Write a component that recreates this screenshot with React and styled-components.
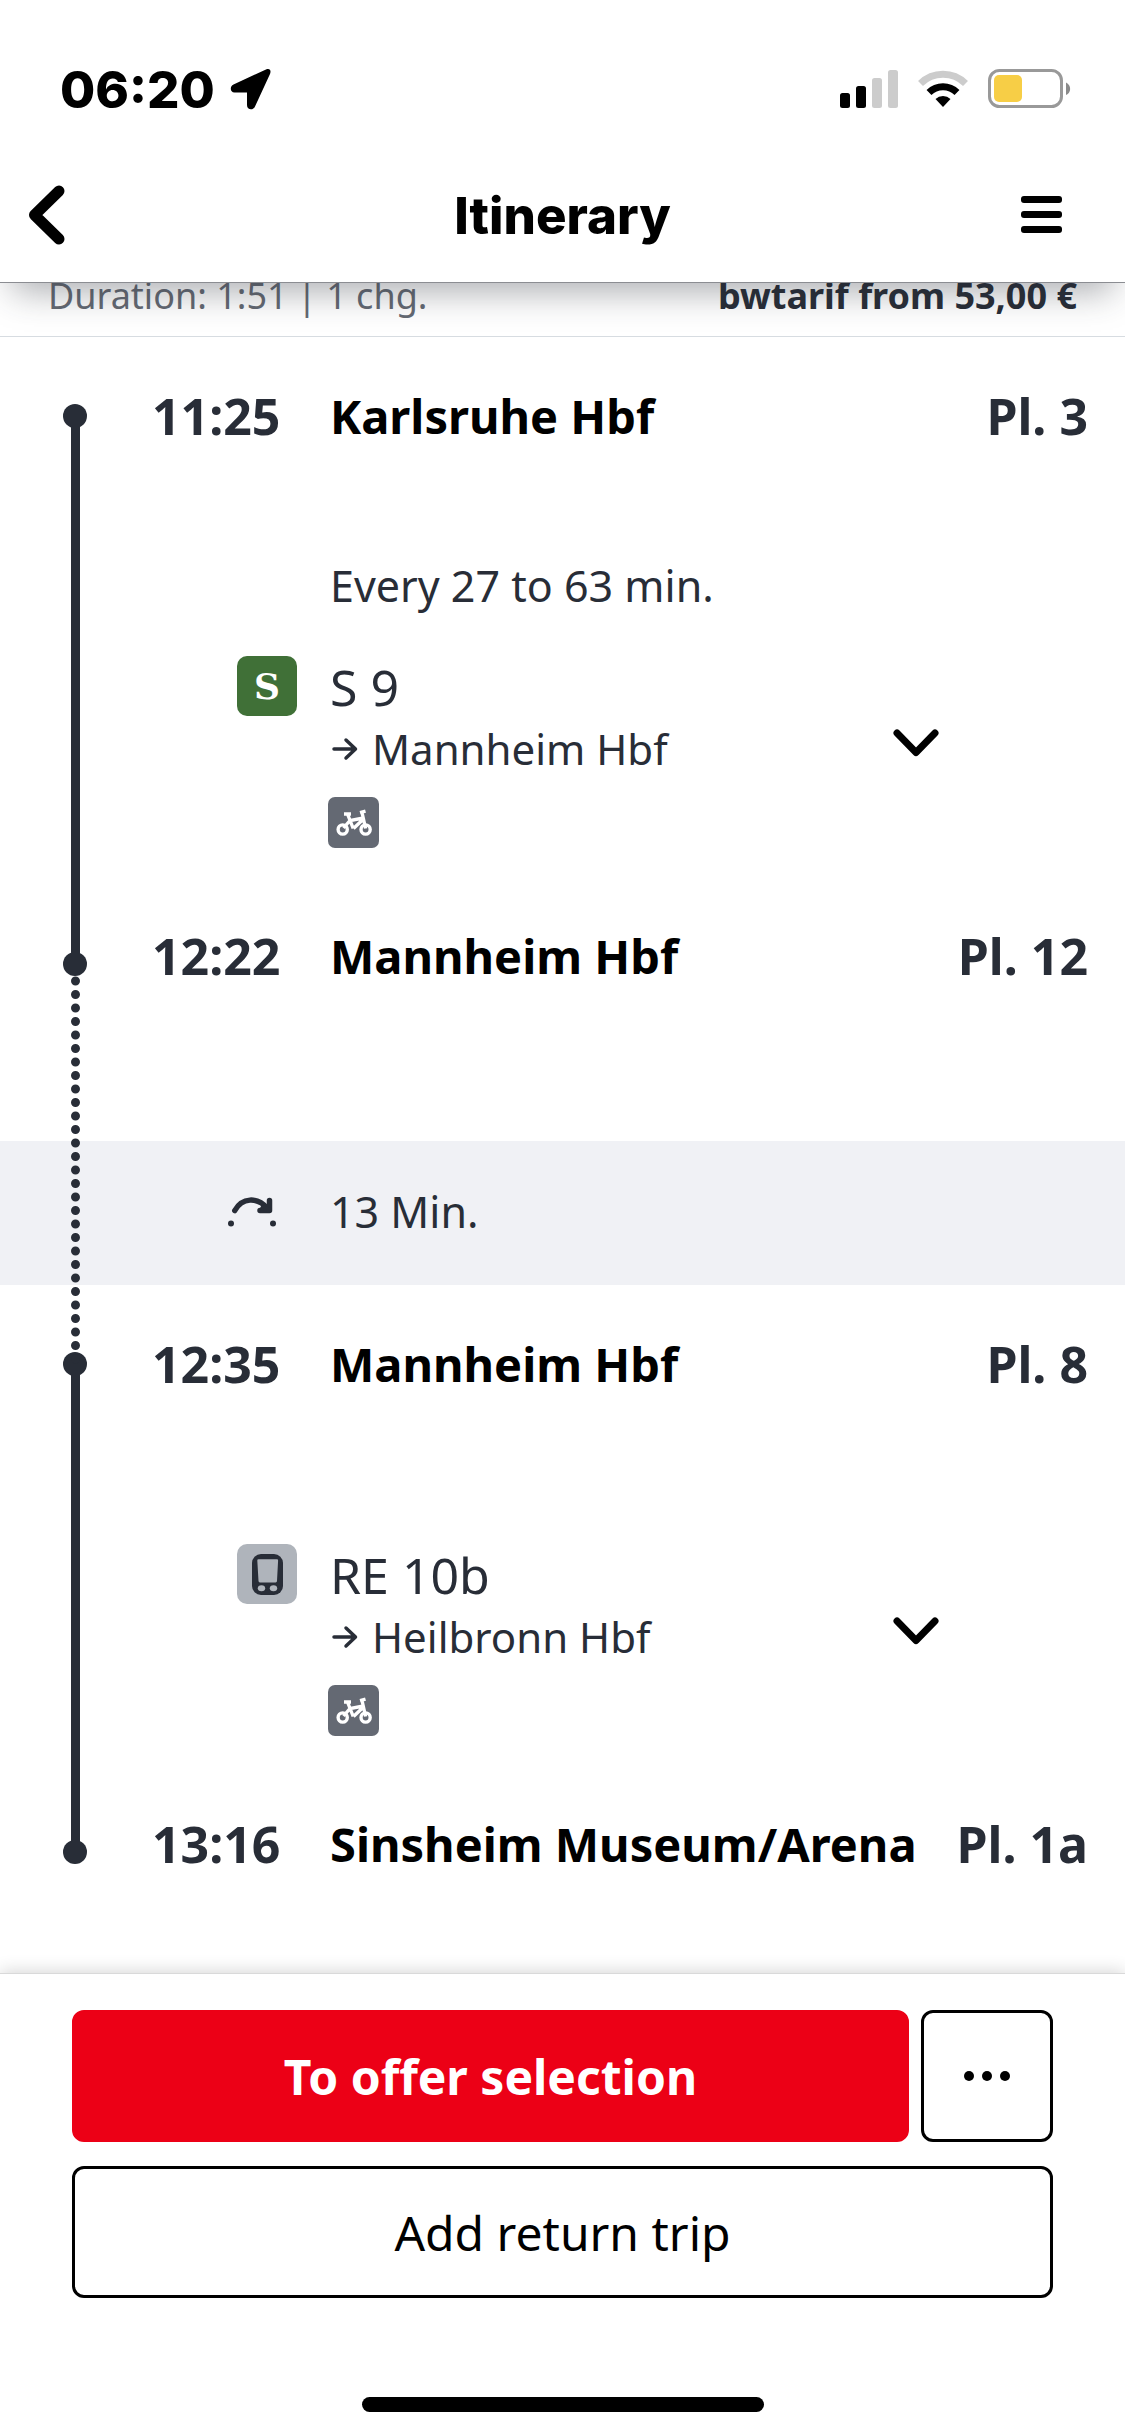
import React, { useState } from "react";
import styled, { createGlobalStyle } from "styled-components";

const tripRows = [
  { type: "stop", time: "11:25", station: "Karlsruhe Hbf", platform: "Pl. 3" },
  {
    type: "leg",
    product: "suburban",
    line: "S 9",
    direction: "Mannheim Hbf",
    headway: "Every 27 to 63 min.",
  },
  { type: "stop", time: "12:22", station: "Mannheim Hbf", platform: "Pl. 12", arrival: true },
  { type: "transfer", text: "13 Min." },
  { type: "stop", time: "12:35", station: "Mannheim Hbf", platform: "Pl. 8" },
  { type: "leg", product: "regional", line: "RE 10b", direction: "Heilbronn Hbf" },
  {
    type: "stop",
    time: "13:16",
    station: "Sinsheim Museum/Arena",
    platform: "Pl. 1a",
    arrival: true,
  },
];

const StatusBar = () => (
  <StStatusBar>
    <StClock>
      06:20
      <svg width="42" height="42" viewBox="0 0 42 42">
        <path
          d="M37 1.500 4.500 16.500C.5 18.500 1 24.500 5.500 24.500H18V37C18 42.500 24.500 42.500 26 38.500L41 6C42.500 2 40.500 0 37 1.500Z"
        />
      </svg>
    </StClock>
    <StStatusIcons>
      <svg width="58" height="38" viewBox="0 0 58 38">
        <rect x="0" y="23" width="10" height="15" rx="2.500" />
        <rect x="16" y="16" width="10" height="22" rx="2.500" />
        <rect x="32" y="8" width="10" height="30" rx="2.500" fill="#cccccc" />
        <rect x="48" y="0" width="10" height="38" rx="2.500" fill="#cccccc" />
      </svg>
      <svg width="50" height="38" viewBox="0 0 50 38">
        <path d="M2.500 13.500A32 32 0 0 1 47.500 13.500" fill="none" stroke="#cccccc" strokeWidth="7" />
        <path d="M11 22.500A20 20 0 0 1 39 22.500" fill="none" stroke="#000" strokeWidth="7" />
        <path d="M17.500 29A11 11 0 0 1 32.500 29L25 37Z" />
      </svg>
      <svg width="84" height="40" viewBox="0 0 84 40">
        <rect x="1.500" y="1.500" width="72" height="36" rx="10" fill="none" stroke="#999999" strokeWidth="3" />
        <rect x="6" y="6" width="28" height="27" rx="5" fill="#f7ce46" />
        <path d="M78 13.500C83.500 16 83.500 24 78 26Z" fill="#8a8a8a" />
      </svg>
    </StStatusIcons>
  </StStatusBar>
);

const BikeIcon = () => (
  <svg width="51" height="51" viewBox="0 0 51 51" fill="none" stroke="#fff" strokeWidth="3.400">
    <circle cx="14.700" cy="32.500" r="4.600" />
    <circle cx="37.600" cy="32.500" r="4.600" />
    <path d="M16 17h7M19.700 17.500 25.200 31.500M15.500 31l6.500-7.500L35.500 21M25.500 31.500 36 21.500M37.600 31.500 34 15.500M32 15.700l5.500-1.500" />
  </svg>
);

const TrainIcon = () => (
  <svg width="60" height="60" viewBox="0 0 60 60">
    <rect x="15" y="10" width="31" height="41" rx="9" fill="#282d37" />
    <path d="M20.300 16.500Q20.200 15.300 21.500 15.300H40Q41.200 15.300 41.100 16.500L40 37Q39.900 38.400 38.600 38.400H22.900Q21.600 38.400 21.500 37Z" fill="#afb4bb" />
    <ellipse cx="24.500" cy="44.200" rx="3.700" ry="3" fill="#afb4bb" />
    <ellipse cx="36.500" cy="44.200" rx="3.700" ry="3" fill="#afb4bb" />
  </svg>
);

const Stop = ({ row, time, station, platform, arrival }) => (
  <StStop $row={row}>
    <StDot $arrival={arrival} />
    <StTime>{time}</StTime>
    <StStation>{station}</StStation>
    <StPlatform>{platform}</StPlatform>
  </StStop>
);

const Leg = ({ row, product, line, direction, headway }) => {
  const [open, setOpen] = useState(false);

  return (
    <StLeg $row={row} $headway={!!headway}>
      {headway && <StHeadway>{headway}</StHeadway>}
      <StProduct $product={product}>{product === "suburban" ? "S" : <TrainIcon />}</StProduct>
      <StLegInfo>
        <StLine>{line}</StLine>
        <StDirection>
          <svg width="26" height="24" viewBox="0 0 26 24" fill="none" stroke="#282d37" strokeWidth="3.500" strokeLinecap="round" strokeLinejoin="round">
            <path d="M2 12h21M14 3l9.500 9-9.500 9" />
          </svg>
          {direction}
        </StDirection>
        <StAttribute>
          <BikeIcon />
        </StAttribute>
      </StLegInfo>
      <StExpand aria-label="Show stops" aria-expanded={open} onClick={() => setOpen(!open)}>
        <svg width="46" height="28" viewBox="0 0 46 28" fill="none" stroke="#000" strokeWidth="7" strokeLinecap="round" strokeLinejoin="round">
          <path d="M4 4l19 19.500L42 4" />
        </svg>
      </StExpand>
    </StLeg>
  );
};

const Transfer = ({ row, text }) => (
  <StTransfer $row={row}>
    <svg width="48" height="32" viewBox="0 0 48 32" fill="none" stroke="#282d37" strokeWidth="5.500" strokeLinecap="round" strokeLinejoin="round">
      <path d="M6.800 15.500C14 2.500 29 1.500 39.500 13.500" />
      <path d="M41.500 5.500V15.500H32" />
      <path d="M35 13l6 2" />
      <circle cx="3" cy="28.500" r="3" fill="#282d37" stroke="none" />
      <circle cx="45" cy="28.500" r="3" fill="#282d37" stroke="none" />
    </svg>
    <span>{text}</span>
  </StTransfer>
);

const rowTypes = { stop: Stop, leg: Leg, transfer: Transfer };

const App = () => {
  return (
    <StPage>
      <GlobalStyle />
      <StHeader>
        <StatusBar />
        <StNav>
          <StNavBtn aria-label="Back">
            <svg width="38" height="60" viewBox="0 0 38 60" fill="none" stroke="#000" strokeWidth="11" strokeLinecap="round" strokeLinejoin="round">
              <path d="M31 6 6.500 30 31 54" />
            </svg>
          </StNavBtn>
          <StTitle>Itinerary</StTitle>
          <StNavBtn aria-label="Menu" $end>
            <svg width="41" height="38" viewBox="0 0 41 38">
              <rect y="0" width="41" height="7" rx="3" />
              <rect y="15" width="41" height="7" rx="3" />
              <rect y="30" width="41" height="7" rx="3" />
            </svg>
          </StNavBtn>
        </StNav>
      </StHeader>
      <StSummary>
        <span>Duration: 1:51 | 1 chg.</span>
        <strong>bwtarif from 53,00 €</strong>
      </StSummary>
      <StTrip>
        {tripRows.map(({ type, ...rest }, i) => {
          const Row = rowTypes[type];
          return <Row key={i} row={i + 1} {...rest} />;
        })}
        <StRail $from={1} $to={4} />
        <StWalkRail $from={3} $to={6}>
          <svg width="9" height="100%">
            <line x1="4.500" y1="25" x2="4.500" y2="100%" stroke="#282d37" strokeWidth="9" strokeLinecap="round" strokeDasharray="0 13.500" />
          </svg>
        </StWalkRail>
        <StRail $from={5} $to={8} />
      </StTrip>
      <StFooter>
        <StBtnRow>
          <StBtn $primary>To offer selection</StBtn>
          <StMoreBtn aria-label="More options">
            <svg width="46" height="10" viewBox="0 0 46 10">
              <circle cx="5" cy="5" r="5" />
              <circle cx="23" cy="5" r="5" />
              <circle cx="41" cy="5" r="5" />
            </svg>
          </StMoreBtn>
        </StBtnRow>
        <StBtn>Add return trip</StBtn>
        <StHomeBar />
      </StFooter>
    </StPage>
  );
};

export default App;

const GlobalStyle = createGlobalStyle`
  * {
    box-sizing: border-box;
  }
  body {
    margin: 0;
    background: #fff;
    color: #282d37;
    font-family: "Noto Sans", sans-serif;
  }
  button {
    padding: 0;
    border: 0;
    background: none;
    font: inherit;
    cursor: pointer;
  }
  svg {
    display: block;
    flex-shrink: 0;
  }
`;

const StPage = styled.div`
  display: flex;
  flex-direction: column;
  min-height: 100vh;
`;

const StHeader = styled.header`
  position: relative;
  z-index: 1;
  background: #fff;
  border-bottom: 1px solid #8b8d92;
  box-shadow: 0 20px 34px -12px rgba(40, 45, 55, 0.4);
  color: #000;
  font-family: "Inter", sans-serif;
`;

const StStatusBar = styled.div`
  display: flex;
  justify-content: space-between;
  align-items: center;
  height: 148px;
  padding: 30px 53px 0 60px;
`;

const StClock = styled.div`
  display: flex;
  align-items: center;
  column-gap: 14px;
  font-size: 51px;
  font-weight: 800;
`;

const StStatusIcons = styled.div`
  display: flex;
  align-items: center;
  column-gap: 20px;
`;

const StNav = styled.nav`
  display: grid;
  grid-template-columns: 1fr auto 1fr;
  align-items: center;
  height: 134px;
  padding: 0 28px;
`;

const StNavBtn = styled.button`
  display: flex;
  justify-content: ${({ $end }) => ($end ? "flex-end" : "flex-start")};
  padding-right: ${({ $end }) => ($end ? "35px" : "0")};
`;

const StTitle = styled.h1`
  margin: 0;
  font-size: 51px;
  font-weight: 800;
`;

const StSummary = styled.div`
  display: flex;
  justify-content: space-between;
  height: 54px;
  padding: 0 48px;
  border-bottom: 1px solid #d7dce1;
  color: #646973;
  font-size: 36px;
  line-height: 26px;

  strong {
    color: #282d37;
  }
`;

const StTrip = styled.main`
  display: grid;
  grid-template-columns: 150px 180px 1fr;
  padding: 49px 0;
`;

const StStop = styled.section`
  grid-column: 1 / -1;
  grid-row: ${({ $row }) => $row};
  display: grid;
  grid-template-columns: 150px 180px 1fr auto;
  align-items: center;
  height: 60px;
  padding-right: 37px;
  font-size: 50px;
  font-weight: 700;
  line-height: 60px;
  white-space: nowrap;
`;

const StDot = styled.i`
  justify-self: center;
  width: 24px;
  height: 24px;
  margin-top: ${({ $arrival }) => ($arrival ? "16px" : "0")};
  border-radius: 50%;
  background: #282d37;
`;

const StTime = styled.time`
  padding-left: 2px;
`;

const StStation = styled.span`
  color: #000;
  font-size: 47px;
`;

const StPlatform = styled.span``;

const StRail = styled.div`
  grid-column: 1;
  grid-row: ${({ $from, $to }) => `${$from} / ${$to}`};
  justify-self: center;
  width: 9px;
  margin: 30px 0;
  background: #282d37;
`;

const StWalkRail = styled(StRail)`
  background: none;
`;

const StLeg = styled.section`
  grid-column: 1 / -1;
  grid-row: ${({ $row }) => $row};
  display: grid;
  grid-template-columns: 297px 1fr 45px;
  column-gap: 31px;
  padding: ${({ $headway }) => ($headway ? "112px" : "150px")} 187px 78px 0;
`;

const StHeadway = styled.p`
  grid-column: 2 / -1;
  margin: 0 0 42px;
  padding-left: 2px;
  font-size: 43px;
  line-height: 56px;
`;

const StProduct = styled.span`
  justify-self: end;
  display: flex;
  align-items: center;
  justify-content: center;
  width: 60px;
  height: 60px;
  border-radius: 10px;
  background: ${({ $product }) => ($product === "suburban" ? "#407037" : "#afb4bb")};
  color: #fff;
  font-family: "DejaVu Serif", serif;
  font-size: 36px;
  font-weight: 700;
`;

const StLegInfo = styled.div`
  display: flex;
  flex-direction: column;
`;

const StLine = styled.span`
  padding-left: 2px;
  font-size: 50px;
  line-height: 62px;
`;

const StDirection = styled.span`
  display: flex;
  align-items: center;
  column-gap: 14px;
  padding-left: 4px;
  font-size: 42px;
  line-height: 62px;
`;

const StAttribute = styled.span`
  width: 51px;
  height: 51px;
  margin-top: 17px;
  border-radius: 7px;
  background: #646973;
`;

const StExpand = styled.button`
  align-self: start;
  padding: 73px 0 24px;
`;

const StTransfer = styled.section`
  grid-column: 1 / -1;
  grid-row: ${({ $row }) => $row};
  display: grid;
  grid-template-columns: 276px 1fr;
  column-gap: 54px;
  align-items: center;
  height: 144px;
  margin: 155px 0 49px;
  padding-bottom: 4px;
  background: #f0f1f5;
  font-size: 43px;

  svg {
    justify-self: end;
  }
`;

const StFooter = styled.footer`
  display: flex;
  flex-direction: column;
  row-gap: 24px;
  margin-top: auto;
  padding: 36px 72px 24px;
  border-top: 1px solid #d9d9d9;
  box-shadow: 0 -2px 16px rgba(0, 0, 0, 0.16);
`;

const StBtnRow = styled.div`
  display: flex;
  column-gap: 12px;
`;

const StBtn = styled.button`
  flex: 1 0 auto;
  height: 132px;
  border: 3px solid ${({ $primary }) => ($primary ? "#ec0016" : "#000")};
  border-radius: 12px;
  background: ${({ $primary }) => ($primary ? "#ec0016" : "#fff")};
  color: ${({ $primary }) => ($primary ? "#fff" : "#000")};
  font-size: 48px;
  font-weight: ${({ $primary }) => ($primary ? 700 : 400)};
`;

const StMoreBtn = styled.button`
  display: flex;
  align-items: center;
  justify-content: center;
  width: 132px;
  height: 132px;
  border: 3px solid #000;
  border-radius: 12px;
`;

const StHomeBar = styled.div`
  align-self: center;
  width: 402px;
  height: 15px;
  margin-top: 75px;
  border-radius: 8px;
  background: #000;
`;
